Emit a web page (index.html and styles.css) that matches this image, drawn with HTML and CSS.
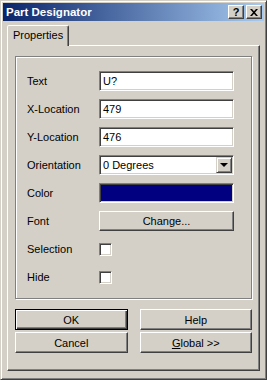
FILE: index.html
```html
<!DOCTYPE html>
<html lang="en">

<head>
  <meta charset="UTF-8">
  <title>Part Designator</title>
  <link rel="stylesheet" href="styles.css">
</head>

<body>
  <div class="window">
    <div class="titlebar">
      <span class="title">Part Designator</span>
      <div class="caption-buttons">
        <div class="cap-btn help">?</div>
        <div class="cap-btn">
          <svg width="8" height="7" viewBox="0 0 8 7">
            <path d="M0 0h2l2 2.2L6 0h2L5 3.5 8 7H6L4 4.8 2 7H0l3-3.5z" fill="#000"/>
          </svg>
        </div>
      </div>
    </div>

    <div class="client">
      <div class="tabs">
        <div class="tab active">Properties</div>
      </div>
      <div class="panel">
        <div class="group">
          <div class="row">
            <span class="label">Text</span>
            <div class="field">U?</div>
          </div>
          <div class="row">
            <span class="label">X-Location</span>
            <div class="field">479</div>
          </div>
          <div class="row">
            <span class="label">Y-Location</span>
            <div class="field">476</div>
          </div>
          <div class="row">
            <span class="label">Orientation</span>
            <div class="field combo">
              <span class="combo-text">0 Degrees</span>
              <span class="combo-btn"><span class="arrow"></span></span>
            </div>
          </div>
          <div class="row">
            <span class="label">Color</span>
            <div class="field swatch"></div>
          </div>
          <div class="row">
            <span class="label">Font</span>
            <div class="btn wide">Change...</div>
          </div>
          <div class="row">
            <span class="label">Selection</span>
            <div class="check"></div>
          </div>
          <div class="row">
            <span class="label">Hide</span>
            <div class="check"></div>
          </div>
        </div>

        <div class="buttons">
          <div class="btn default">OK</div>
          <div class="btn">Help</div>
          <div class="btn">Cancel</div>
          <div class="btn"><u>G</u>lobal &gt;&gt;</div>
        </div>
      </div>
    </div>
  </div>
</body>

</html>
```

FILE: styles.css
```css
html,
body {
  margin: 0;
  padding: 0;
  background: #D4D0C8;
}

* {
  box-sizing: border-box;
}

.window {
  width: 267px;
  height: 380px;
  display: flex;
  flex-direction: column;
  padding: 2px;
  background: #D4D0C8;
  border: 1px solid;
  border-color: #D4D0C8 #404040 #404040 #D4D0C8;
  box-shadow: inset 1px 1px #FFF, inset -1px -1px #808080;
  font-family: "Liberation Sans", Arial, sans-serif;
  font-size: 11px;
  color: #000;
}

.titlebar {
  height: 18px;
  display: flex;
  align-items: center;
  justify-content: space-between;
  padding: 0 2px 0 2px;
  background: linear-gradient(to right, #0A246A, #A6CAF0);
}

.title {
  color: #FFF;
  font-weight: bold;
  font-size: 11.5px;
  padding-left: 1px;
}

.caption-buttons {
  display: flex;
  gap: 2px;
}

.cap-btn {
  width: 16px;
  height: 14px;
  display: flex;
  align-items: center;
  justify-content: center;
  background: #D4D0C8;
  border: 1px solid;
  border-color: #FFF #404040 #404040 #FFF;
  box-shadow: inset -1px -1px #808080;
}

.cap-btn.help {
  font-weight: bold;
  font-size: 11px;
  line-height: 12px;
}

.client {
  flex: 1;
  display: flex;
  flex-direction: column;
  padding: 4px 4px 6px 4px;
}

.tabs {
  display: flex;
}

.tab {
  position: relative;
  z-index: 1;
  height: 21px;
  margin-bottom: -1px;
  padding: 3px 5px 0 5px;
  background: #D4D0C8;
  border: 1px solid;
  border-bottom: none;
  border-color: #FFF #404040 transparent #FFF;
  border-radius: 2px 2px 0 0;
  box-shadow: inset -1px 0 #808080;
}

.panel {
  flex: 1;
  padding: 10px 7px 7px 7px;
  border: 1px solid;
  border-color: #FFF #404040 #404040 #FFF;
  box-shadow: inset -1px -1px #808080;
}

.group {
  display: grid;
  grid-template-columns: 72px 135px;
  row-gap: 8px;
  padding: 14px 0 11px 11px;
  border: 1px solid #808080;
  box-shadow: 1px 1px 0 #FFF, inset 1px 1px 0 #FFF;
}

.row {
  display: contents;
}

.label {
  height: 20px;
  line-height: 20px;
}

.field {
  height: 20px;
  line-height: 18px;
  padding: 0 3px;
  background: #FFF;
  border: 1px solid;
  border-color: #808080 #FFF #FFF #808080;
  box-shadow: inset 1px 1px #404040, inset -1px -1px #D4D0C8;
}

.combo {
  display: flex;
  align-items: center;
  justify-content: space-between;
  padding-right: 1px;
}

.combo-btn {
  width: 16px;
  height: 16px;
  display: flex;
  align-items: center;
  justify-content: center;
  background: #D4D0C8;
  border: 1px solid;
  border-color: #D4D0C8 #404040 #404040 #D4D0C8;
  box-shadow: inset 1px 1px #FFF, inset -1px -1px #808080;
}

.arrow {
  width: 0;
  height: 0;
  border-left: 4px solid transparent;
  border-right: 4px solid transparent;
  border-top: 4px solid #000;
}

.swatch {
  background: #000080;
}

.check {
  width: 13px;
  height: 13px;
  align-self: center;
  background: #FFF;
  border: 1px solid;
  border-color: #808080 #FFF #FFF #808080;
  box-shadow: inset 1px 1px #404040, inset -1px -1px #D4D0C8;
}

.btn {
  height: 21px;
  display: flex;
  align-items: center;
  justify-content: center;
  background: #D4D0C8;
  border: 1px solid;
  border-color: #FFF #404040 #404040 #FFF;
  box-shadow: inset -1px -1px #808080;
}

.btn.wide {
  height: 20px;
}

.btn.default {
  border-color: #000;
  box-shadow: inset 1px 1px #FFF, inset -1px -1px #404040, inset -2px -2px #808080;
}

.buttons {
  display: grid;
  grid-template-columns: 1fr 1fr;
  column-gap: 12px;
  row-gap: 2px;
  margin-top: 10px;
}
```
